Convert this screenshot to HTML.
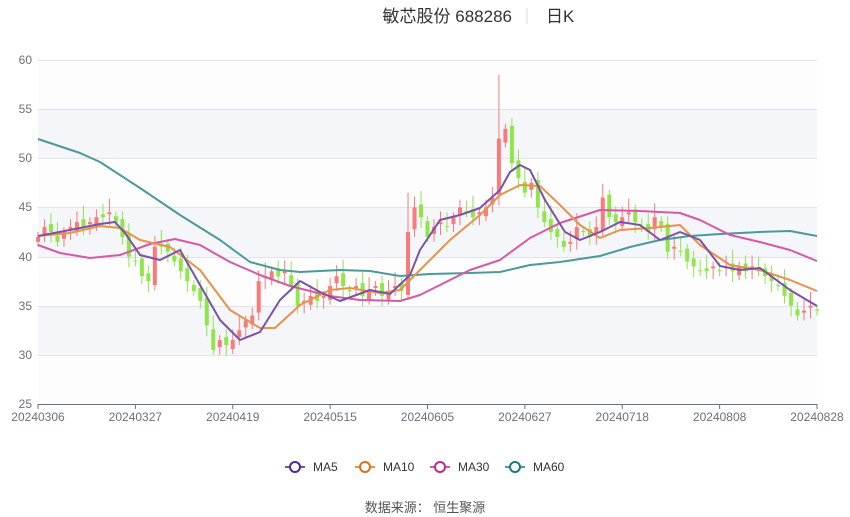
<!DOCTYPE html>
<html><head><meta charset="utf-8"><style>
body{margin:0;background:#fff;width:850px;height:517px;overflow:hidden;font-family:"Liberation Sans","Noto Sans CJK SC",sans-serif}
</style></head><body>
<svg id="s" width="850" height="517" xmlns="http://www.w3.org/2000/svg" style="position:absolute;left:0;top:0">
<rect x="38" y="60" width="779" height="49" fill="#fdfdfe"/>
<rect x="38" y="109" width="779" height="49" fill="#f5f6fa"/>
<rect x="38" y="158" width="779" height="49" fill="#fdfdfe"/>
<rect x="38" y="207" width="779" height="50" fill="#f5f6fa"/>
<rect x="38" y="257" width="779" height="49" fill="#fdfdfe"/>
<rect x="38" y="306" width="779" height="49" fill="#f5f6fa"/>
<rect x="38" y="355" width="779" height="49" fill="#fdfdfe"/>
<g stroke="#e0e3ee" stroke-width="1">
<line x1="38" x2="817" y1="60.5" y2="60.5"/><line x1="38" x2="817" y1="109.5" y2="109.5"/><line x1="38" x2="817" y1="158.5" y2="158.5"/><line x1="38" x2="817" y1="207.5" y2="207.5"/><line x1="38" x2="817" y1="257.5" y2="257.5"/><line x1="38" x2="817" y1="306.5" y2="306.5"/><line x1="38" x2="817" y1="355.5" y2="355.5"/>
</g>
<line x1="38" x2="817" y1="404.5" y2="404.5" stroke="#6e7079"/>
<g font-size="12" fill="#6e7079" text-anchor="end">
<text x="32" y="64">60</text><text x="32" y="113">55</text><text x="32" y="162">50</text><text x="32" y="211">45</text><text x="32" y="261">40</text><text x="32" y="310">35</text><text x="32" y="359">30</text><text x="32" y="408">25</text>
</g>
<g id="ticks" stroke="#6e7079"></g>
<g id="xl" font-size="12" fill="#6e7079" text-anchor="middle"></g>
<g id="c"></g>
<g fill="none" stroke-width="2" stroke-linejoin="round">
<polyline stroke="#4a9a9a" points="38,139 80,153 100,162 140,188 180,215 220,240 250,262 280,270 300,272 340,270 370,271 400,276 430,274 470,273 500,272 530,265 560,262 600,256 630,247 660,240 690,236 720,234 760,232 790,231 817,236"/>
<polyline stroke="#d659a8" points="38,245 60,253 90,258 120,255 150,244 175,239 200,245 230,262 260,275 290,286 330,296 360,300 400,301 420,295 440,285 470,270 500,260 530,238 560,223 600,210 640,211 680,213 700,220 730,235 760,242 790,250 817,261"/>
<polyline stroke="#e8924a" points="38,236 70,233 100,226 120,228 140,240 170,247 200,270 230,310 260,328 275,328 300,305 330,290 350,288 380,293 400,290 420,270 450,240 480,215 500,195 520,185 540,186 560,205 580,225 600,238 620,230 650,228 680,225 700,245 730,265 760,270 790,280 817,291"/>
<polyline stroke="#7b52a8" points="38,236 70,230 100,224 115,222 125,233 140,255 160,260 180,250 200,285 220,320 240,340 260,332 280,300 300,281 320,292 340,301 370,290 390,294 410,275 420,250 440,220 460,215 480,208 500,190 510,172 520,165 530,170 545,200 565,232 580,240 600,232 620,222 640,225 660,240 680,232 700,240 720,266 740,270 760,268 790,290 817,306"/>
</g>
<text x="512" y="22" font-size="17" fill="#333" text-anchor="end">敏芯股份 688286</text>
<line x1="527" x2="527" y1="8" y2="24" stroke="#ddd"/>
<text x="546" y="22" font-size="17" fill="#333">日K</text>
<g font-size="12" fill="#333" stroke-width="2" fill-opacity="1">
<line x1="285" x2="305" y1="467" y2="467" stroke="#7b52a8"/><circle cx="295" cy="467" r="5" fill="#fff" stroke="#4b2a98"/><text x="313" y="471">MA5</text>
<line x1="355" x2="375" y1="467" y2="467" stroke="#e8924a"/><circle cx="365" cy="467" r="5" fill="#fff" stroke="#d8721a"/><text x="383" y="471">MA10</text>
<line x1="430" x2="450" y1="467" y2="467" stroke="#d659a8"/><circle cx="440" cy="467" r="5" fill="#fff" stroke="#c62888"/><text x="458" y="471">MA30</text>
<line x1="505" x2="525" y1="467" y2="467" stroke="#4a9a9a"/><circle cx="515" cy="467" r="5" fill="#fff" stroke="#1a7a7a"/><text x="533" y="471">MA60</text>
</g>
<text x="425" y="512" font-size="13" fill="#555" text-anchor="middle">数据来源： 恒生聚源</text>
</svg>
<script>
var ns="http://www.w3.org/2000/svg";
function el(t,a,p){var e=document.createElementNS(ns,t);for(var k in a)e.setAttribute(k,a[k]);document.getElementById(p).appendChild(e);return e;}
var labs=["20240306","20240327","20240419","20240515","20240605","20240627","20240718","20240808","20240828"];
for(var i=0;i<9;i++){var x=38+i*779/8;el("line",{x1:x,x2:x,y1:404,y2:409},"ticks");var t=el("text",{x:x,y:421},"xl");t.textContent=labs[i];}
var c=[42,43,42.5,41.5,42.5,43,43.5,43,43.5,44,44,44.5,43.5,42,40,39.5,38,37.5,41,41,40.5,39.5,38.5,37.5,36.5,35.5,33,30.5,31.5,31,31.5,32.5,33.5,34,37.5,38,38.5,38,38.5,37,35,35.5,36,35.5,36,37,38,37,36.5,37,36,36.5,37,36,36.5,37,36.5,42.5,45,44,42,43,43.5,43,44,45,44.5,44,44.5,45,46,52,53,49.5,48,46.5,47.5,45,43.5,42.5,42,41,41.5,43,42.5,42,43,46,44,43.5,44,44.5,43.5,43,42.5,44,43,40.5,41,40.5,39.5,39,38.5,38.5,39,38.5,39,38.5,39,38.5,39,38.5,38,37.5,37,36,35,34,34.5,35,34.5];
function Y(p){return 404-(p-25)*9.829;}
var st=779/(c.length-1);
for(var i=0;i<c.length;i++){var o=i?c[i-1]+(i%3?0.3:-0.4):41.5,cl=c[i];var up=cl>=o;var col=up?"#f87a7a":"#8fe64a";var hi=Math.max(o,cl)+0.5+(i%4)*0.3,lo=Math.min(o,cl)-0.5-(i%3)*0.3;if(i==71){hi=58.5;}if(i==57)hi=46.5;var x=38+i*st;
el("line",{x1:x,x2:x,y1:Y(hi),y2:Y(lo),stroke:col,"stroke-width":1},"c");
var t=Y(Math.max(o,cl)),b=Y(Math.min(o,cl));el("rect",{x:x-2,y:t,width:4,height:Math.max(1,b-t),fill:col},"c");}
</script>
</body></html>
